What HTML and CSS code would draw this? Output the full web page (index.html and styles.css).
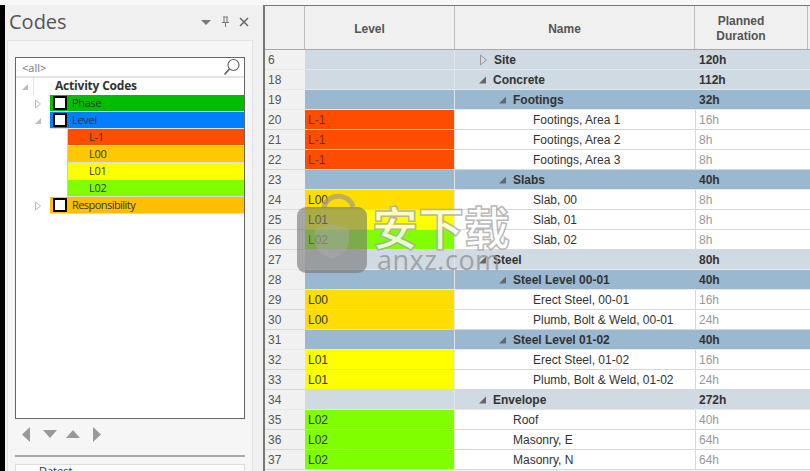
FILE: index.html
```html
<!DOCTYPE html>
<html lang="zh">
<head>
<meta charset="utf-8">
<title>Codes</title>
<link rel="stylesheet" href="styles.css">
</head>
<body>
<div class="top-strip"></div>
<div class="app">
  <aside class="side">
    <div class="side-head">
      <h1 class="side-title">Codes</h1>
      <div class="side-tools">
        <svg class="ico" width="12" height="12" viewBox="0 0 12 12"><path d="M1 4h10L6 9z" fill="#777"/></svg>
        <svg class="ico" width="12" height="12" viewBox="0 0 12 12"><path d="M4 1h5M5 1v5M8 1v5M3 6.500h7M6.500 6.500V11" stroke="#777" fill="none"/></svg>
        <svg class="ico" width="12" height="12" viewBox="0 0 12 12"><path d="M2 2l8 8M10 2l-8 8" stroke="#666" stroke-width="1.500" fill="none"/></svg>
      </div>
    </div>
    <div class="side-body">
      <div class="tree-box">
        <div class="search">
          <span class="search-text">&lt;all&gt;</span>
          <svg width="18" height="18" viewBox="0 0 18 18"><circle cx="10.500" cy="7" r="5.500" fill="none" stroke="#666" stroke-width="1.200"/><path d="M6.500 11L1.500 16.500" stroke="#666" stroke-width="1.800" fill="none"/></svg>
        </div>
        <div class="tree-root">
          <span class="root-gutter"><svg width="8" height="8" viewBox="0 0 8 8"><path d="M7 1v6H1z" fill="#bbb"/></svg></span>
          <span class="root-label">Activity Codes</span>
        </div>
        <div class="t-row">
          <span class="t-arrow"><svg width="8" height="10" viewBox="0 0 8 10"><path d="M1.500 1l5 4-5 4z" fill="#fff" stroke="#bbb"/></svg></span>
          <span class="t-main c-phase"><i class="chk"></i>Phase</span>
        </div>
        <div class="t-row">
          <span class="t-arrow"><svg width="8" height="8" viewBox="0 0 8 8"><path d="M7 1v6H1z" fill="#bbb"/></svg></span>
          <span class="t-main c-level"><i class="chk"></i>Level</span>
        </div>
        <div class="t-row t-sub"><span class="t-child c-red">L-1</span></div>
        <div class="t-row t-sub"><span class="t-child c-gold">L00</span></div>
        <div class="t-row t-sub"><span class="t-child c-yellow">L01</span></div>
        <div class="t-row t-sub"><span class="t-child c-green">L02</span></div>
        <div class="t-row">
          <span class="t-arrow"><svg width="8" height="10" viewBox="0 0 8 10"><path d="M1.500 1l5 4-5 4z" fill="#fff" stroke="#bbb"/></svg></span>
          <span class="t-main c-resp"><i class="chk"></i><span class="tight">Responsibility</span></span>
        </div>
      </div>
      <div class="nav-arrows">
        <svg class="na-l" width="8" height="15" viewBox="0 0 8 15"><path d="M8 0v15L0 7.500z" fill="#999"/></svg>
        <svg width="14" height="8" viewBox="0 0 14 8"><path d="M0 0h14L7 8z" fill="#999"/></svg>
        <svg width="14" height="8" viewBox="0 0 14 8"><path d="M0 8h14L7 0z" fill="#999"/></svg>
        <svg class="na-r" width="8" height="15" viewBox="0 0 8 15"><path d="M0 0v15l8-7.500z" fill="#999"/></svg>
      </div>
      <div class="divider"></div>
      <div class="bottom-box"><span class="bottom-text">Datest</span></div>
    </div>
  </aside>
  <main class="grid">
    <div class="g-head">
      <div class="h-cell"></div>
      <div class="h-cell h-txt">Level</div>
      <div class="h-cell h-txt">Name</div>
      <div class="h-cell h-txt h-two">Planned<br>Duration</div>
      <div class="h-end"></div>
    </div>
    <div class="row b1"><div class="num">6</div><div class="lvl"></div><div class="name in1 bold"><svg class="tw" width="9" height="12" viewBox="0 0 9 12"><path d="M1.500 1l6 5-6 5z" fill="none" stroke="#999"/></svg>Site</div><div class="dur bold">120h</div></div>
    <div class="row b1"><div class="num">18</div><div class="lvl"></div><div class="name in1b bold"><svg class="tw" width="9" height="12" viewBox="0 0 9 12"><path d="M8 2.500v7H1z" fill="#666"/></svg>Concrete</div><div class="dur bold">112h</div></div>
    <div class="row b2"><div class="num">19</div><div class="lvl"></div><div class="name in2 bold"><svg class="tw" width="9" height="12" viewBox="0 0 9 12"><path d="M8 2.500v7H1z" fill="#666"/></svg>Footings</div><div class="dur bold">32h</div></div>
    <div class="row"><div class="num">20</div><div class="lvl c-red">L-1</div><div class="name in3">Footings, Area 1</div><div class="dur">16h</div></div>
    <div class="row"><div class="num">21</div><div class="lvl c-red">L-1</div><div class="name in3">Footings, Area 2</div><div class="dur">8h</div></div>
    <div class="row"><div class="num">22</div><div class="lvl c-red">L-1</div><div class="name in3">Footings, Area 3</div><div class="dur">8h</div></div>
    <div class="row b2"><div class="num">23</div><div class="lvl"></div><div class="name in2 bold"><svg class="tw" width="9" height="12" viewBox="0 0 9 12"><path d="M8 2.500v7H1z" fill="#666"/></svg>Slabs</div><div class="dur bold">40h</div></div>
    <div class="row"><div class="num">24</div><div class="lvl c-gold2">L00</div><div class="name in3">Slab, 00</div><div class="dur">8h</div></div>
    <div class="row"><div class="num">25</div><div class="lvl c-yellow">L01</div><div class="name in3">Slab, 01</div><div class="dur">8h</div></div>
    <div class="row"><div class="num">26</div><div class="lvl c-green">L02</div><div class="name in3">Slab, 02</div><div class="dur">8h</div></div>
    <div class="row b1"><div class="num">27</div><div class="lvl"></div><div class="name in1b bold"><svg class="tw" width="9" height="12" viewBox="0 0 9 12"><path d="M8 2.500v7H1z" fill="#666"/></svg>Steel</div><div class="dur bold">80h</div></div>
    <div class="row b2"><div class="num">28</div><div class="lvl"></div><div class="name in2 bold"><svg class="tw" width="9" height="12" viewBox="0 0 9 12"><path d="M8 2.500v7H1z" fill="#666"/></svg>Steel Level 00-01</div><div class="dur bold">40h</div></div>
    <div class="row"><div class="num">29</div><div class="lvl c-gold2">L00</div><div class="name in3">Erect Steel, 00-01</div><div class="dur">16h</div></div>
    <div class="row"><div class="num">30</div><div class="lvl c-gold2">L00</div><div class="name in3">Plumb, Bolt &amp; Weld, 00-01</div><div class="dur">24h</div></div>
    <div class="row b2"><div class="num">31</div><div class="lvl"></div><div class="name in2 bold"><svg class="tw" width="9" height="12" viewBox="0 0 9 12"><path d="M8 2.500v7H1z" fill="#666"/></svg>Steel Level 01-02</div><div class="dur bold">40h</div></div>
    <div class="row"><div class="num">32</div><div class="lvl c-yellow">L01</div><div class="name in3">Erect Steel, 01-02</div><div class="dur">16h</div></div>
    <div class="row"><div class="num">33</div><div class="lvl c-yellow">L01</div><div class="name in3">Plumb, Bolt &amp; Weld, 01-02</div><div class="dur">24h</div></div>
    <div class="row b1"><div class="num">34</div><div class="lvl"></div><div class="name in1b bold"><svg class="tw" width="9" height="12" viewBox="0 0 9 12"><path d="M8 2.500v7H1z" fill="#666"/></svg>Envelope</div><div class="dur bold">272h</div></div>
    <div class="row"><div class="num">35</div><div class="lvl c-green">L02</div><div class="name in2b">Roof</div><div class="dur">40h</div></div>
    <div class="row"><div class="num">36</div><div class="lvl c-green">L02</div><div class="name in2b">Masonry, E</div><div class="dur">64h</div></div>
    <div class="row"><div class="num">37</div><div class="lvl c-green">L02</div><div class="name in2b">Masonry, N</div><div class="dur">64h</div></div>
  </main>
</div>
<div class="wm">
  <div class="wm-lock">
    <svg width="70" height="82" viewBox="0 0 70 82"><path d="M27 16C29 1 52 0 56 15" fill="none" stroke="#a8a078" stroke-width="5" opacity=".75"/><rect x="0" y="15" width="70" height="66" rx="9" fill="#777" opacity=".62"/><path d="M35 32l17 5v12c0 9-8 14-17 18-9-4-17-9-17-18V37z" fill="#aaa" opacity=".45"/></svg>
  </div>
  <div class="wm-text">
    <div class="wm-cn">安下载</div>
    <div class="wm-en">anxz.com</div>
  </div>
</div>
</body>
</html>
```
FILE: styles.css
```css
* { box-sizing: border-box; }
html, body { margin: 0; height: 100%; overflow: hidden; }
body { background: #f0f0f0; font-family: "Liberation Sans", Arial, sans-serif; color: #222; position: relative; width: 810px; height: 471px; }
.top-strip { height: 5px; background: #f8f8f8; }
.app { display: flex; height: 466px; border-left: 5px solid #000; }
.side { width: 253px; height: 466px; display: flex; flex-direction: column; overflow: hidden; padding-left: 2px; }
.side-head { height: 35px; display: flex; align-items: center; justify-content: space-between; padding: 0 8px 2px 2px; flex: none; }
.side-title { margin: 0; font: 400 20px/24px "Open Sans", sans-serif; color: #555; }
.side-tools { display: flex; gap: 7px; align-items: center; }
.ico { display: block; }
.side-body { width: 246px; flex: 1; background: #f6f6f6; border: 1px solid #e2e2e2; border-bottom: 0; padding: 16px 7px 0; }
.tree-box { width: 230px; height: 362px; background: #fff; border: 1px solid #666; }
.search { height: 20px; display: flex; align-items: center; justify-content: space-between; padding: 0 3px 0 6px; border-bottom: 2px solid #e4e4e4; }
.search-text { font: 400 11px "Open Sans", sans-serif; color: #777; }
.tree-root { height: 17px; display: flex; align-items: center; }
.root-gutter { width: 18px; height: 17px; display: flex; align-items: center; justify-content: center; border-right: 1px solid #e4e4e4; }
.root-label { margin: -2px 0 0 21px; font: 700 12px "Open Sans", sans-serif; letter-spacing: -.2px; color: #333; }
.t-row { height: 17px; display: flex; align-items: stretch; font: 400 11px/16px "Open Sans", sans-serif; letter-spacing: -.3px; color: #333; }
.t-arrow { width: 34px; display: flex; align-items: center; justify-content: center; padding-left: 10px; }
.t-main { flex: 1; display: flex; align-items: center; gap: 5px; padding-left: 3px; border-bottom: 1px solid #ddd; }
.tight { letter-spacing: -.55px; }
.chk { width: 14px; height: 14px; background: #fff; border: 2.500px solid #000; flex: none; }
.t-sub { padding-left: 51px; }
.t-child { flex: 1; padding-left: 21px; border-bottom: 1px solid #ddd; border-left: 1px solid #ccc; }
.c-phase { background: #00bd00; }
.c-level { background: #0080ff; }
.c-resp { background: #ffbf00; }
.c-red { background: #ff4d00; }
.c-gold { background: #ffc800; }
.c-gold2 { background: #ffdd00; }
.c-yellow { background: #ffff00; }
.c-green { background: #80ff00; }
.nav-arrows { height: 36px; display: flex; align-items: center; gap: 9px; padding: 0 0 6px 7px; }
.na-l { margin-right: 4px; }
.na-r { margin-left: 4px; }
.divider { height: 2px; background: #aaa; width: 230px; }
.bottom-box { margin-top: 7px; width: 230px; height: 30px; background: #fcfcfc; border: 1px solid #ddd; padding-left: 23px; font: 400 11px/12px "Open Sans", sans-serif; color: #333; }
.bottom-text { display: block; }
.grid { margin-left: 5px; width: 547px; height: 466px; border: 1px solid #777; border-width: 1px 0 0 2px; overflow: hidden; background: #f3f3f3; font-size: 12px; }
.g-head { height: 44px; display: grid; grid-template-columns: 40px 150px 240px 113px 1fr; border-bottom: 1px solid #a8a8a8; background: #f0f0f0; }
.h-cell { display: flex; align-items: center; justify-content: center; text-align: center; border-right: 1px solid #bcbcbc; font-weight: 700; line-height: 15px; color: #555; }
.h-txt { padding: 4px 20px 0 0; }
.h-two { padding-top: 2px; }
.h-end { background: #f0f0f0; }
.row { height: 20px; display: grid; grid-template-columns: 40px 150px 240px 113px 1fr; grid-template-rows: 19px; background: #fff; border-bottom: 1px solid #d8d8d8; line-height: 20px; }
.num { background: #f1f1f1; padding-left: 3px; color: #555; }
.lvl { padding-left: 3px; color: #333; border-right: 1px solid #e8e8e8; }
.lvl.c-red { color: #7a2a10; }
.name { display: flex; align-items: center; color: #333; white-space: pre; }
.dur { padding-left: 3px; color: #999; border-left: 1px solid #d8d8d8; }
.bold { font-weight: 700; color: #333; }
.tw { flex: none; margin-right: 6px; }
.in1 { padding-left: 24px; }
.in1b { padding-left: 23px; }
.in2 { padding-left: 43px; }
.in2b { padding-left: 58px; }
.in3 { padding-left: 78px; }
.b1 .lvl, .b1 .name, .b1 .dur { background: #cfdae2; }
.b2 .lvl, .b2 .name, .b2 .dur { background: #9ab8cf; }
.b1, .b2 { border-bottom-color: #e4e8ec; }
.b1 .lvl, .b2 .lvl { border-right-color: #dfe7ed; }
.b1 .dur, .b2 .dur { border-left: 0; padding-left: 4px; }
.b1 { background: #cfdae2; }
.b2 { background: #9ab8cf; }
.wm { position: absolute; left: 297px; top: 192px; width: 400px; height: 90px; display: flex; gap: 5px; pointer-events: none; }
.wm-lock { width: 70px; }
.wm-text { width: 140px; padding-top: 5px; }
.wm-cn { font: 700 46px/56px "Noto Sans CJK SC", sans-serif; color: #fff; -webkit-text-stroke: 1.500px #a9a9a9; opacity: .8; white-space: nowrap; }
.wm-en { margin-top: -7px; padding-left: 5px; font: 400 27px/28px "Open Sans", sans-serif; letter-spacing: .5px; color: #8f8f8f; opacity: .72; white-space: nowrap; }
```
